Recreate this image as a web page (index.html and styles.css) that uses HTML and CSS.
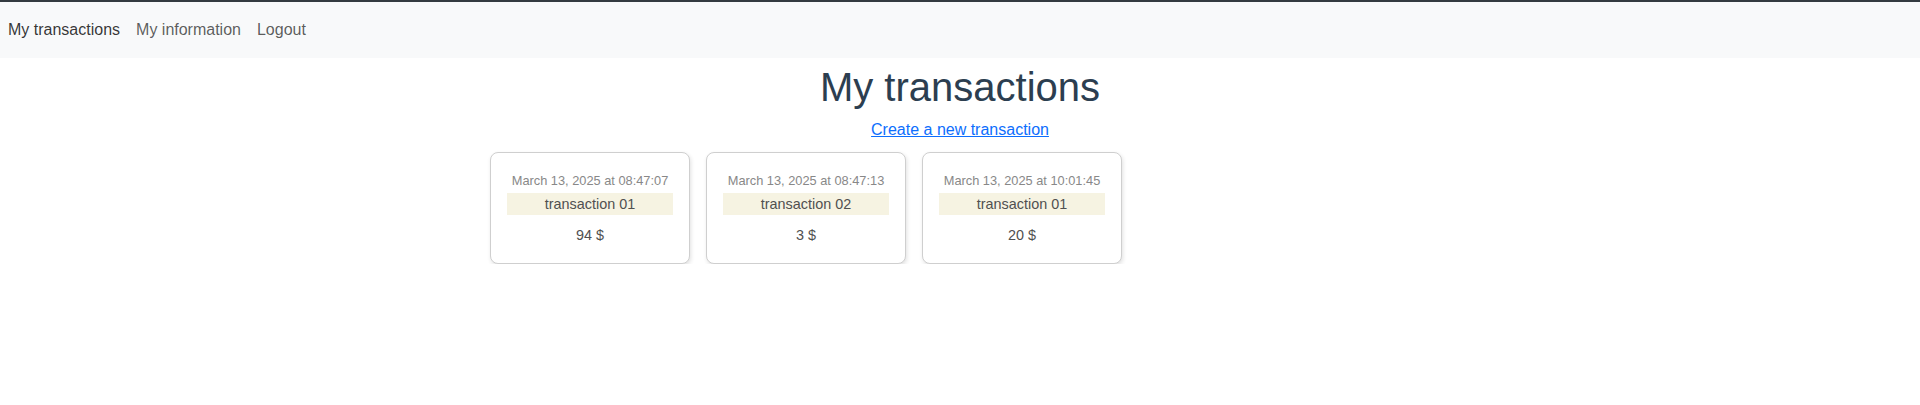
FILE: index.html
```html
<!DOCTYPE html>
<html lang="en">
<head>
<meta charset="utf-8">
<title>My transactions</title>
<link rel="stylesheet" href="styles.css">
</head>
<body>
<div class="app">
  <nav class="navbar">
    <a class="nav-link active" href="#">My transactions</a>
    <a class="nav-link" href="#">My information</a>
    <a class="nav-link" href="#">Logout</a>
  </nav>
  <main class="page">
    <h1 class="title">My transactions</h1>
    <a class="create-link" href="#">Create a new transaction</a>
    <div class="cards">
      <div class="card">
        <div class="card-date">March 13, 2025 at 08:47:07</div>
        <div class="card-name">transaction 01</div>
        <div class="card-amount">94 $</div>
      </div>
      <div class="card">
        <div class="card-date">March 13, 2025 at 08:47:13</div>
        <div class="card-name">transaction 02</div>
        <div class="card-amount">3 $</div>
      </div>
      <div class="card">
        <div class="card-date">March 13, 2025 at 10:01:45</div>
        <div class="card-name">transaction 01</div>
        <div class="card-amount">20 $</div>
      </div>
    </div>
  </main>
</div>
</body>
</html>
```

FILE: styles.css
```css
* { box-sizing: border-box; }

html, body {
  margin: 0;
  padding: 0;
  background: #ffffff;
}

body {
  font-family: "Liberation Sans", Arial, Helvetica, sans-serif;
  font-size: 16px;
  color: #2c3e50;
  border-top: 2px solid #343a40;
}

.navbar {
  display: flex;
  align-items: center;
  height: 56px;
  background: #f8f9fa;
}

.nav-link {
  padding: 0 8px;
  font-size: 16px;
  line-height: 24px;
  color: rgba(0, 0, 0, 0.65);
  text-decoration: none;
}

.nav-link.active {
  color: rgba(0, 0, 0, 0.8);
}

.page {
  display: flex;
  flex-direction: column;
  align-items: center;
}

.title {
  margin: 5px 0 0;
  font-size: 40px;
  font-weight: 400;
  line-height: 48px;
  color: #2c3e50;
}

.create-link {
  margin-top: 9px;
  font-size: 16px;
  line-height: 20px;
  color: #0d6efd;
  text-decoration: underline;
}

.cards {
  width: 940px;
  margin-top: 12px;
  display: flex;
  flex-wrap: wrap;
  gap: 16px;
}

.card {
  width: 200px;
  height: 112px;
  padding: 18px 16px 16px;
  border: 1px solid #cfcfcf;
  border-radius: 8px;
  box-shadow: 1px 2px 4px rgba(0, 0, 0, 0.12);
  text-align: center;
  background: #fff;
}

.card-date {
  font-size: 12.8px;
  line-height: 20px;
  color: #888888;
  margin-bottom: 2px;
}

.card-name {
  font-size: 14.4px;
  line-height: 22px;
  background: #f6f3e2;
  color: #505050;
}

.card-amount {
  margin-top: 9px;
  font-size: 14.4px;
  line-height: 22px;
  color: #505050;
}
```
